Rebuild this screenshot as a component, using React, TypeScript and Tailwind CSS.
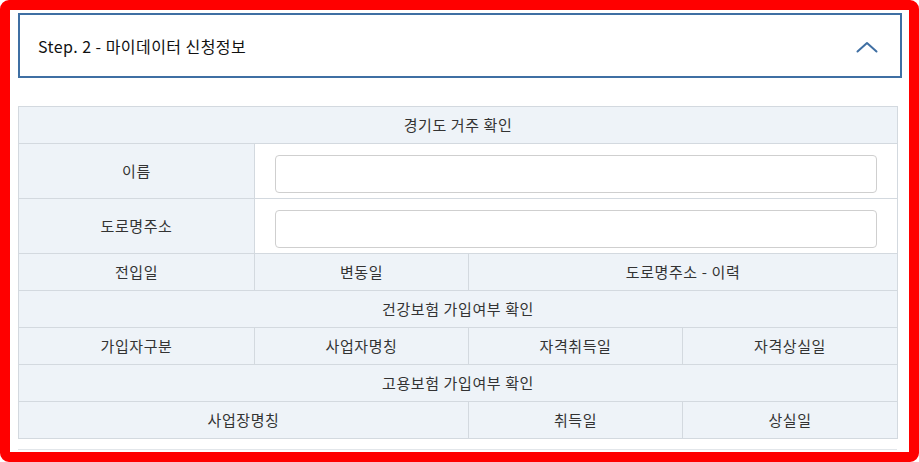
import { ChevronUp } from 'lucide-react'

const cell = "border border-[#d3d9df] bg-[#eef3f8] text-center align-middle"

export default function App() {
  return (
    <div className="w-[919px] h-[462px] bg-white">
      <div
        className="w-full h-full border-[10px] border-[#ff0000] rounded-[9px] bg-white overflow-hidden"
        style={{ fontFamily: '"Noto Sans CJK KR", "Noto Sans", sans-serif' }}
      >
        {/* Step header */}
        <div className="mt-[3px] ml-[8px] mr-[7px] h-[65px] border-2 border-[#3f6fa3] flex items-center justify-between pl-[18px] pr-[22px]">
          <span className="text-[16px] font-normal text-[#111] tracking-[0.45px]">
            Step. 2 - 마이데이터 신청정보
          </span>
          <svg width="22" height="12" viewBox="0 0 22 12" fill="none" className="mt-[2px]">
            <path d="M1.5 10.5 L11 2 L20.5 10.5" stroke="#3f6fa3" strokeWidth="2" strokeLinecap="round" strokeLinejoin="round" />
          </svg>
        </div>

        {/* Data table */}
        <div className="mt-[28px] ml-[8px] w-[879px] border-b border-[#e2e6ea] pb-[10px]">
          <table className="w-full table-fixed border-collapse text-[15px] text-[#333] tracking-[0.6px]">
            <colgroup>
              <col className="w-[236px]" />
              <col className="w-[214px]" />
              <col className="w-[214px]" />
              <col className="w-[215px]" />
            </colgroup>
            <tbody>
              <tr className="h-[37px]">
                <td colSpan={4} className={cell}>경기도 거주 확인</td>
              </tr>
              <tr className="h-[55px]">
                <td className={cell}>이름</td>
                <td colSpan={3} className="border border-[#d3d9df] bg-white px-[20px] pt-[6px] align-middle">
                  <input className="block w-full h-[38px] border border-[#cfcfcf] rounded-[4px] bg-white outline-none px-2" />
                </td>
              </tr>
              <tr className="h-[55px]">
                <td className={cell}>도로명주소</td>
                <td colSpan={3} className="border border-[#d3d9df] bg-white px-[20px] pt-[6px] align-middle">
                  <input className="block w-full h-[38px] border border-[#cfcfcf] rounded-[4px] bg-white outline-none px-2" />
                </td>
              </tr>
              <tr className="h-[37px]">
                <td className={cell}>전입일</td>
                <td className={cell}>변동일</td>
                <td colSpan={2} className={cell}>도로명주소 - 이력</td>
              </tr>
              <tr className="h-[37px]">
                <td colSpan={4} className={cell}>건강보험 가입여부 확인</td>
              </tr>
              <tr className="h-[37px]">
                <td className={cell}>가입자구분</td>
                <td className={cell}>사업자명칭</td>
                <td className={cell}>자격취득일</td>
                <td className={cell}>자격상실일</td>
              </tr>
              <tr className="h-[37px]">
                <td colSpan={4} className={cell}>고용보험 가입여부 확인</td>
              </tr>
              <tr className="h-[37px]">
                <td colSpan={2} className={cell}>사업장명칭</td>
                <td className={cell}>취득일</td>
                <td className={cell}>상실일</td>
              </tr>
            </tbody>
          </table>
        </div>
      </div>
    </div>
  )
}
